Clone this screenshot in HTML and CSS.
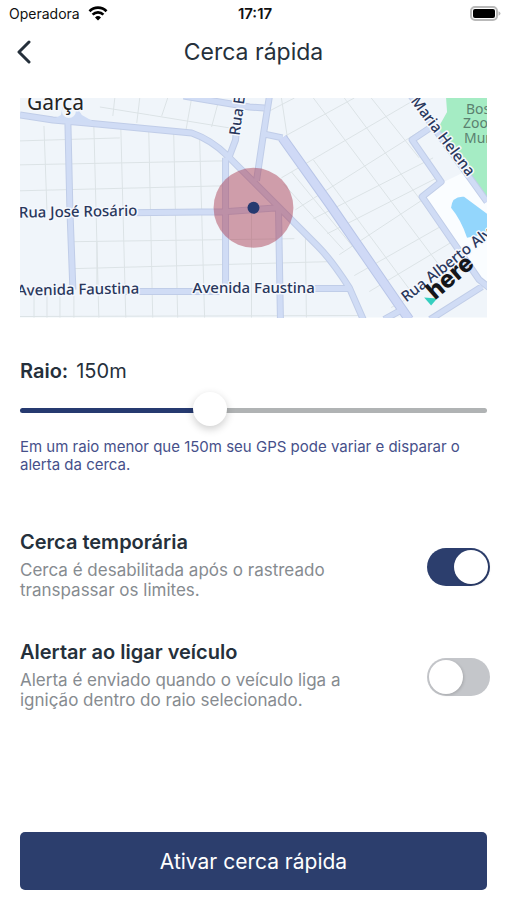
FILE: index.html
```html
<!DOCTYPE html>
<html lang="pt-BR">
<head>
    <meta charset="UTF-8">
    <title>Cerca rápida</title>
    <meta name="viewport" content="width=device-width, initial-scale=1.0">
    <link rel="stylesheet" href="styles.css">
</head>
<body>
    <div class="status-bar">
        <div class="carrier">
            <span>Operadora</span>
            <svg class="wifi" width="20" height="15" viewBox="0 0 20 15" aria-hidden="true">
                <path d="M1.5 5.2a12 12 0 0 1 17 0M4.6 8.6a7.6 7.6 0 0 1 10.8 0" fill="none" stroke="#000" stroke-width="2.7"/>
                <path d="M10 14.4l-3-3a4.3 4.3 0 0 1 6 0z" fill="#000"/>
            </svg>
        </div>
        <span class="clock">17:17</span>
        <svg class="battery" width="31" height="15" viewBox="0 0 31 15" aria-hidden="true">
            <rect x="1" y="1" width="26" height="13" rx="4" fill="#fff" stroke="#b9b9b9" stroke-width="2"/>
            <rect x="3" y="3" width="22" height="9" rx="2" fill="#000"/>
            <path d="M28.5 5.2q2 .8 2 2.3t-2 2.3z" fill="#b9b9b9"/>
        </svg>
    </div>

    <header class="top-bar">
        <button type="button" class="back" aria-label="Voltar">
            <svg width="16" height="24" viewBox="0 0 16 24" aria-hidden="true">
                <path d="M13 2L3 12l10 10" fill="none" stroke="#25303b" stroke-width="3" stroke-linecap="round" stroke-linejoin="round"/>
            </svg>
        </button>
        <h1>Cerca rápida</h1>
    </header>

    <main class="content">
        <svg class="map" viewBox="0 0 468 220" role="img" aria-label="Mapa">
            <rect width="468" height="220" fill="#f0f5fa"/>
            <!-- quadras -->
            <g class="blocks">
                <path d="M0 43L100 40M0 67L205 63M0 93L205 88M54 144L275 141M55 171L310 164M0 219L340 218"/>
                <path d="M24 28l3 85M74 28l5 192M101 29l5 191M129 31l4 189M154 34l4 186M180 40l5 180M77 144v46"/>
                <path d="M14 196v24M27 196v24M40 196v24M54 190v30M232 115v105M286 138l1 82"/>
                <path d="M95 0l-2 18M120 0l-3 25M148 0l-6 18M172 0l-6 34M199 3l-7 26M80 9l50 8 80 13"/>
                <path d="M250 13L275 0M266 38L335 0M262 80L402 -2M276 112L406 30M294 121L414 60M308 136L418 80M320 157L405 101M335 178L430 124M350 194L440 140M372 210L460 162"/>
                <path d="M262 0l6 40M294 0l140 186M325 0l112 150M352 0l48 60M272 74l110 134M294 62l98 132M264 86l60 66"/>
            </g>
            <path d="M427 0l1 14-9 16 6 20 43 50V0z" fill="#a5ecc4"/>
            <path d="M406 100l17-15 25-12 20 29v84l-10-4z" fill="#fafdff"/>
            <path d="M432 110q1-12 13-11l23 17v20l-20 4q-6-18-16-30z" fill="#93d6fc"/>
            <!-- ruas: contorno e preenchimento -->
            <path class="road-edge" d="M0 17L33 22L67 25L172 35Q192 42 208 58L234 84L259 109L298 148Q312 162 330 190L344 222M48 25L50 112L53 192M206 60V190M210 58L216 42L220 0M164 -2L230 9L245 10M250 -2L244 36L237 83M244 36L263 40M259 109L261 222M110 115L205 114L259 110M100 194H200M290 191H330M417 26L393 42L422 84L403 99L460 182L470 190M411 222L463 189M392 -2L468 104M365 222L383 212"/>
            <path class="avenue-edge" d="M263 40L310 106L383 212L390 222"/>
            <path class="road" d="M0 17L33 22L67 25L172 35Q192 42 208 58L234 84L259 109L298 148Q312 162 330 190L344 222M48 25L50 112L53 192M206 60V190M210 58L216 42L220 0M164 -2L230 9L245 10M250 -2L244 36L237 83M244 36L263 40M259 109L261 222M110 115L205 114L259 110M100 194H200M290 191H330M417 26L393 42L422 84L403 99L460 182L470 190M411 222L463 189M392 -2L468 104M365 222L383 212"/>
            <path class="avenue" d="M263 40L310 106L383 212L390 222"/>
            <path d="M32 22l9-5 2-10h12l7 10 14 8z" fill="#cfdcf5"/>
            <circle cx="49" cy="13" r="7" fill="#f0f5fa"/>

            <circle cx="234" cy="110" r="40" fill="#a6324a" fill-opacity="0.45"/>
            <circle cx="234" cy="110" r="6" fill="#263a70"/>

            <g class="street">
                <text x="-1" y="120" transform="rotate(-1 0 120)">Rua José Rosário</text>
                <text x="-3" y="198" transform="rotate(-1 0 198)">Avenida Faustina</text>
                <text x="173" y="195">Avenida Faustina</text>
                <text x="220" y="38" transform="rotate(-82 220 38)">Rua Euclides</text>
                <text x="391" y="3" transform="rotate(53 391 3)">Maria Helena</text>
                <text x="387" y="205" transform="rotate(-38 387 205)">Rua Alberto Alves</text>
            </g>
            <text class="district" x="7" y="12">Garça</text>
            <g class="park">
                <text x="447" y="16">Bosque</text>
                <text x="444" y="30">Zoológico</text>
                <text x="445" y="45">Municipal</text>
            </g>
            <path d="M405 200l13 1-6 7z" fill="#35cfc0"/>
            <text class="here" x="416" y="203" transform="rotate(-41 416 203)">here</text>
        </svg>

        <section class="radius">
            <div class="radius-value">
                <label for="raio">Raio:</label>
                <output id="raioValor" for="raio">150m</output>
            </div>
            <input type="range" id="raio" class="slider" min="50" max="300" step="10" value="150">
            <p class="hint">Em um raio menor que 150m seu GPS pode variar e disparar o alerta da cerca.</p>
        </section>

        <section class="options">
            <div class="option">
                <div class="option-text">
                    <label for="temporaria">Cerca temporária</label>
                    <p>Cerca é desabilitada após o rastreado transpassar os limites.</p>
                </div>
                <input type="checkbox" id="temporaria" class="switch" checked>
            </div>
            <div class="option">
                <div class="option-text">
                    <label for="alertar">Alertar ao ligar veículo</label>
                    <p>Alerta é enviado quando o veículo liga a ignição dentro do raio selecionado.</p>
                </div>
                <input type="checkbox" id="alertar" class="switch">
            </div>
        </section>

        <button type="button" class="activate">Ativar cerca rápida</button>
    </main>
    <script src="script.js"></script>
</body>
</html>
```

FILE: styles.css
```css
* {
    box-sizing: border-box;
}
body {
    display: flex;
    flex-direction: column;
    min-height: 100vh;
    margin: 0;
    font-family: Inter, "Liberation Sans", sans-serif;
    background: #fff;
    color: #25303b;
}
h1, p {
    margin: 0;
}
.status-bar {
    display: grid;
    grid-template-columns: 1fr auto 1fr;
    align-items: center;
    height: 26px;
    padding: 0 6px 0 9px;
    font-size: 14px;
    color: #111;
}
.carrier {
    display: flex;
    align-items: center;
    gap: 8px;
}
.clock {
    font-size: 15px;
    font-weight: 600;
}
.battery {
    justify-self: end;
}
.top-bar {
    display: grid;
    grid-template-columns: 32px 1fr 32px;
    align-items: center;
    height: 52px;
    padding: 0 16px;
}
.top-bar h1 {
    font-size: 23px;
    font-weight: 400;
    line-height: 28px;
    text-align: center;
}
.back {
    display: flex;
    padding: 0;
    border: 0;
    background: none;
    cursor: pointer;
}
.content {
    display: flex;
    flex-direction: column;
    flex: 1;
    padding: 20px 20px 10px;
}

/* mapa */
.map {
    display: block;
    width: 100%;
    height: auto;
}
.blocks path {
    fill: none;
    stroke: #dce3e6;
    stroke-width: 1;
}
.road,
.road-edge {
    fill: none;
    stroke: #c0cde8;
    stroke-width: 7;
    stroke-linejoin: round;
}
.road {
    stroke: #d0dcf5;
    stroke-width: 5;
}
.avenue,
.avenue-edge {
    fill: none;
    stroke: #b9c6e8;
    stroke-width: 10;
    stroke-linejoin: round;
}
.avenue {
    stroke: #cfd9f6;
    stroke-width: 8;
}
.map text {
    font-family: "Noto Sans", sans-serif;
    font-size: 15px;
    paint-order: stroke;
    stroke: #f5f8fd;
    stroke-width: 3px;
    stroke-linejoin: round;
}
.map .street text {
    font-weight: 500;
    fill: #29375c;
}
.map .district {
    font-size: 21px;
    fill: #222;
}
.map .park text {
    font-size: 14px;
    fill: #5b8170;
    stroke: none;
}
.map .here {
    font-family: Inter, sans-serif;
    font-size: 24px;
    font-weight: 800;
    fill: #14161a;
    stroke: none;
}

/* raio */
.radius {
    margin-top: 41px;
}
.radius-value {
    display: flex;
    gap: 8px;
    font-size: 20px;
    line-height: 24px;
}
.radius-value label {
    font-weight: 600;
}
.slider {
    --fill: 40%;
    display: block;
    width: 100%;
    height: 34px;
    margin: 11px 0 10px;
    appearance: none;
    background: none;
    cursor: pointer;
}
.slider::-webkit-slider-runnable-track {
    height: 5px;
    border-radius: 3px;
    background: linear-gradient(to right, #263a70 var(--fill), #b0b3b4 var(--fill));
}
.slider::-webkit-slider-thumb {
    appearance: none;
    width: 34px;
    height: 34px;
    margin-top: -16px;
    border-radius: 50%;
    background: #fff;
    box-shadow: 0 3px 8px rgba(0, 0, 0, 0.2);
}
.hint {
    font-size: 15px;
    line-height: 18px;
    color: #46508a;
}

/* opções */
.options {
    display: flex;
    flex-direction: column;
    gap: 36px;
    margin-top: 56px;
}
.option {
    display: flex;
    align-items: center;
    justify-content: space-between;
    margin-right: -3px;
}
.option-text {
    max-width: 350px;
    padding-bottom: 4px;
}
.option-text label {
    display: block;
    margin-bottom: 6px;
    font-size: 20px;
    font-weight: 600;
    line-height: 24px;
}
.option-text p {
    font-size: 17px;
    line-height: 20px;
    color: #868b90;
}
.switch {
    flex: none;
    width: 63px;
    height: 38px;
    margin: 0;
    padding: 2px;
    appearance: none;
    border-radius: 19px;
    background: #c4c6ca;
    cursor: pointer;
}
.switch::before {
    content: '';
    display: block;
    width: 34px;
    height: 34px;
    border-radius: 50%;
    background: #fff;
    box-shadow: 1px 1px 3px rgba(0, 0, 0, 0.15);
}
.switch:checked {
    background: #2c3e6d;
}
.switch:checked::before {
    margin-left: auto;
}
.activate {
    height: 58px;
    margin-top: auto;
    border: 0;
    border-radius: 5px;
    background: #2c3e6d;
    color: #fff;
    font-family: inherit;
    font-size: 21px;
    cursor: pointer;
}
```

FILE: script.js
```js
var raio = document.getElementById('raio');

raio.addEventListener('input', function() {
    var fill = (raio.value - raio.min) / (raio.max - raio.min) * 100;
    raio.style.setProperty('--fill', fill + '%');
    document.getElementById('raioValor').innerText = raio.value + 'm';
});
```
